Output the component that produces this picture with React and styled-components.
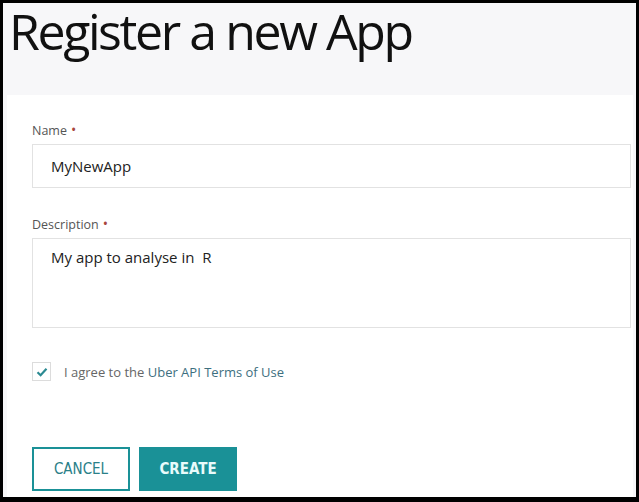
import React from 'react';
import styled, { createGlobalStyle } from 'styled-components';

const GlobalStyle = createGlobalStyle`
  body {
    margin: 0;
    background: #000;
    font-family: "Open Sans", "Noto Sans", sans-serif;
  }
`;

const Frame = styled.div`
  width: 639px;
  height: 502px;
  box-sizing: border-box;
  border-style: solid;
  border-color: #000;
  border-width: 3px 3px 5px 3px;
  background: #f7f7f9;
  display: flex;
  flex-direction: column;
  overflow: hidden;
`;

const Header = styled.header`
  height: 92px;
  flex-shrink: 0;
  padding: 4px 0 0 6px;
  box-sizing: border-box;
`;

const Title = styled.h1`
  margin: 0;
  font-family: "Open Sans", sans-serif;
  font-weight: 400;
  font-size: 50px;
  line-height: 48px;
  letter-spacing: -2.4px;
  color: #111;
`;

const Card = styled.main`
  flex: 1;
  background: #fff;
  margin: 0 3px 0 4px;
  padding: 28px 2px 0 25px;
  display: flex;
  flex-direction: column;
`;

const Label = styled.label`
  display: block;
  font-size: 12.5px;
  line-height: 16px;
  color: #555;
  margin-top: ${p => p.$gap || 0}px;
  margin-bottom: 5px;
`;

const Required = styled.span`
  color: #a8463c;
  margin-left: 4px;
  font-size: 14px;
  line-height: 10px;
`;

const Field = styled.div`
  box-sizing: border-box;
  height: ${p => p.$h}px;
  border: 1px solid #e2e2e2;
  padding: ${p => p.$pt}px 18px 0 18px;
  font-size: 15px;
  line-height: 20px;
  color: #222;
`;

const AgreeRow = styled.div`
  margin-top: 34px;
  display: flex;
  align-items: center;
  gap: 13px;
  font-size: 13px;
  color: #666;
`;

const Check = styled.span`
  width: 19px;
  height: 19px;
  box-sizing: border-box;
  border: 1px solid #dcdcdc;
  display: flex;
  align-items: center;
  justify-content: center;
`;

const TermsLink = styled.a`
  color: #3e6f80;
  text-decoration: none;
`;

const Buttons = styled.div`
  margin-top: 66px;
  display: flex;
  gap: 9px;
`;

const Button = styled.button`
  width: 98px;
  height: 44px;
  box-sizing: border-box;
  border: 2px solid #1a9197;
  background: ${p => (p.$primary ? '#1a9197' : '#fff')};
  color: ${p => (p.$primary ? '#e8fbfb' : '#2a8088')};
  font-family: "Liberation Sans Narrow", "DejaVu Sans Condensed", "Open Sans", sans-serif;
  font-size: 15px;
  font-weight: ${p => (p.$primary ? 700 : 400)};
  padding: 0;
`;

export default function App() {
  return (
    <>
      <GlobalStyle />
      <Frame>
        <Header>
          <Title>Register a new App</Title>
        </Header>
        <Card>
          <Label>Name<Required>•</Required></Label>
          <Field $h={44} $pt={11}>MyNewApp</Field>
          <Label $gap={29}>Description<Required>•</Required></Label>
          <Field $h={90} $pt={8}>My app to analyse in&nbsp; R</Field>
          <AgreeRow>
            <Check>
              <svg width="12" height="10" viewBox="0 0 12 10">
                <path d="M1.5 5.2 L4.6 8.2 L10.5 1.8" fill="none" stroke="#2b8a92" strokeWidth="2.2" />
              </svg>
            </Check>
            <span>
              I agree to the <TermsLink>Uber API Terms of Use</TermsLink>
            </span>
          </AgreeRow>
          <Buttons>
            <Button>CANCEL</Button>
            <Button $primary>CREATE</Button>
          </Buttons>
        </Card>
      </Frame>
    </>
  );
}
